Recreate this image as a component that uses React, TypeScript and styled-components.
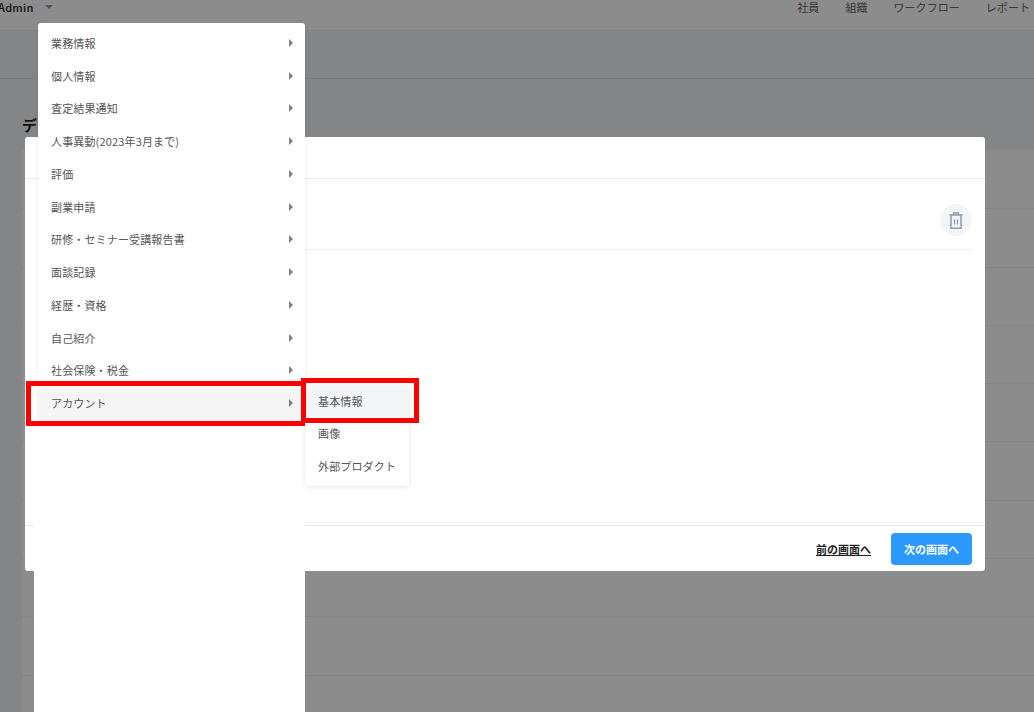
import React from "react";
import styled, { createGlobalStyle } from "styled-components";

const GlobalStyle = createGlobalStyle`
  html, body {
    margin: 0;
    padding: 0;
    background: #f1f3f5;
    font-family: "Noto Sans CJK JP", "Noto Sans", sans-serif;
    font-size: 11px;
    letter-spacing: 0.15px;
    color: #555;
  }
`;

const Page = styled.div`
  position: relative;
  width: 1034px;
  height: 712px;
  overflow: hidden;
  background: #f1f3f5;
`;

const Header = styled.header`
  height: 30px;
  box-sizing: border-box;
  background: #fff;
  display: flex;
  justify-content: space-between;
  padding: 0 4px 16px 0;
  align-items: center;
`;

const Account = styled.div`
  display: flex;
  align-items: center;
  gap: 11px;
  margin-left: -2px;
`;

const AccountName = styled.span`
  font-size: 11px;
  font-weight: 500;
  letter-spacing: 0.3px;
  color: #1c1c1c;
`;

const Caret = styled.span`
  width: 0;
  height: 0;
  border-left: 4px solid transparent;
  border-right: 4px solid transparent;
  border-top: 4px solid #8f9bad;
`;

const Nav = styled.nav`
  display: flex;
  gap: 26px;
`;

const NavItem = styled.span`
  font-size: 11px;
  letter-spacing: 0.05px;
  color: #666;
`;

const SubBar = styled.div`
  height: 49px;
  box-sizing: border-box;
  border-top: 1px solid #e9ebee;
  border-bottom: 1px solid #dcdee1;
`;

const TitleArea = styled.div`
  height: 71px;
  padding: 36px 0 0 22px;
  box-sizing: border-box;
`;

const Title = styled.h1`
  margin: 0;
  font-size: 15px;
  line-height: 20px;
  font-weight: 700;
  color: #222;
`;

const Table = styled.div`
  margin-left: 22px;
  padding-top: 1px;
  background: #fff;
`;

const TableRow = styled.div`
  height: 58.3px;
  box-sizing: border-box;
  border-bottom: 1px solid #f0f0f0;
`;

const Overlay = styled.div`
  position: absolute;
  inset: 0;
  background: rgba(0, 0, 0, 0.45);
`;

const Modal = styled.section`
  position: absolute;
  left: 25px;
  top: 137px;
  width: 960px;
  height: 434px;
  display: flex;
  flex-direction: column;
  background: #fff;
  border-radius: 3px;
`;

const ModalHeader = styled.div`
  height: 42px;
  box-sizing: border-box;
  border-bottom: 1px solid #e9ecf0;
`;

const ModalBody = styled.div`
  flex: 1;
  padding: 0 13px;
`;

const BodyRow = styled.div`
  height: 71px;
  box-sizing: border-box;
  padding-top: 25px;
  display: flex;
  justify-content: flex-end;
  border-bottom: 1px solid #eeeeee;
`;

const RoundButton = styled.button`
  width: 32px;
  height: 32px;
  padding: 0;
  border: none;
  border-radius: 50%;
  background: #f3f4f6;
  display: flex;
  align-items: center;
  justify-content: center;
`;

const ModalFooter = styled.div`
  height: 46px;
  box-sizing: border-box;
  border-top: 1px solid #e8e8e8;
  padding: 7px 13px 6px;
  display: flex;
  justify-content: flex-end;
  align-items: center;
  gap: 20px;
`;

const TextLink = styled.a`
  font-size: 11px;
  font-weight: 700;
  letter-spacing: 0;
  color: #222;
  text-decoration: underline;
`;

const PrimaryButton = styled.button`
  width: 81px;
  height: 32px;
  padding: 0;
  border: none;
  border-radius: 4px;
  background: #2b99ff;
  color: #fff;
  font-family: inherit;
  font-size: 11px;
  font-weight: 700;
`;

const MenuBacking = styled.div`
  position: absolute;
  left: 34px;
  top: 420px;
  width: 271px;
  height: 292px;
  background: #fff;
`;

const Menu = styled.ul`
  position: absolute;
  left: 38px;
  top: 23px;
  width: 267px;
  margin: 0;
  padding: 3.6px 0 0;
  list-style: none;
  background: #fff;
  border-radius: 3px;
  box-shadow: 0 1px 5px rgba(0, 0, 0, 0.08);
`;

const MenuItem = styled.li<{ $active?: boolean }>`
  position: relative;
  height: 32.75px;
  padding: 0 12.5px 0 13px;
  display: flex;
  align-items: center;
  justify-content: space-between;
  color: #555;
  background: ${(p) => (p.$active ? "#f5f5f6" : "transparent")};
`;

const Arrow = styled.span`
  width: 0;
  height: 0;
  border-top: 4px solid transparent;
  border-bottom: 4px solid transparent;
  border-left: 4px solid #808080;
`;

const SubMenu = styled.ul`
  position: absolute;
  left: 100%;
  top: -2px;
  width: 104px;
  margin: 0;
  padding: 0 0 4px;
  list-style: none;
  background: #fff;
  border-radius: 3px;
  box-shadow: 0 1px 5px rgba(0, 0, 0, 0.1);
`;

const SubMenuItem = styled.li<{ $active?: boolean }>`
  position: relative;
  height: 32.3px;
  padding: 0 13px;
  display: flex;
  align-items: center;
  white-space: nowrap;
  color: #555;
  background: ${(p) => (p.$active ? "#f4f5f7" : "transparent")};
`;

const RedFrame = styled.span<{ $inset: string }>`
  position: absolute;
  inset: ${(p) => p.$inset};
  border: 5px solid #fe0000;
  pointer-events: none;
`;

const menuItems = [
  "業務情報",
  "個人情報",
  "査定結果通知",
  "人事異動(2023年3月まで)",
  "評価",
  "副業申請",
  "研修・セミナー受講報告書",
  "面談記録",
  "経歴・資格",
  "自己紹介",
  "社会保険・税金",
];

const navItems = ["社員", "組織", "ワークフロー", "レポート"];

function TrashIcon() {
  return (
    <svg width="14" height="17" viewBox="0 0 14 17" fill="none" stroke="#8c9cb3">
      <path d="M0.5 3h13" strokeWidth="1.6" />
      <path d="M4.5 3V1h5v2" strokeWidth="1.4" />
      <path d="M2 3.5v12.7h10V3.5" strokeWidth="1.5" />
      <path d="M5.5 7.5v5M8.5 7.5v5" strokeWidth="1.3" />
    </svg>
  );
}

function App() {
  return (
    <Page>
      <GlobalStyle />
      <Header>
        <Account>
          <AccountName>Admin</AccountName>
          <Caret />
        </Account>
        <Nav>
          {navItems.map((item) => (
            <NavItem key={item}>{item}</NavItem>
          ))}
        </Nav>
      </Header>
      <SubBar />
      <TitleArea>
        <Title>データ</Title>
      </TitleArea>
      <Table>
        {Array.from({ length: 10 }, (_, i) => (
          <TableRow key={i} />
        ))}
      </Table>

      <Overlay />

      <Modal>
        <ModalHeader />
        <ModalBody>
          <BodyRow>
            <RoundButton>
              <TrashIcon />
            </RoundButton>
          </BodyRow>
        </ModalBody>
        <ModalFooter>
          <TextLink>前の画面へ</TextLink>
          <PrimaryButton>次の画面へ</PrimaryButton>
        </ModalFooter>
      </Modal>

      <MenuBacking />
      <Menu>
        {menuItems.map((item) => (
          <MenuItem key={item}>
            {item}
            <Arrow />
          </MenuItem>
        ))}
        <MenuItem $active>
          アカウント
          <Arrow />
          <RedFrame $inset="-6px -1px -6.4px -12px" />
          <SubMenu>
            <SubMenuItem $active>
              基本情報
              <RedFrame $inset="-7px -10px -5.7px -4px" />
            </SubMenuItem>
            <SubMenuItem>画像</SubMenuItem>
            <SubMenuItem>外部プロダクト</SubMenuItem>
          </SubMenu>
        </MenuItem>
      </Menu>
    </Page>
  );
}

export default App;
